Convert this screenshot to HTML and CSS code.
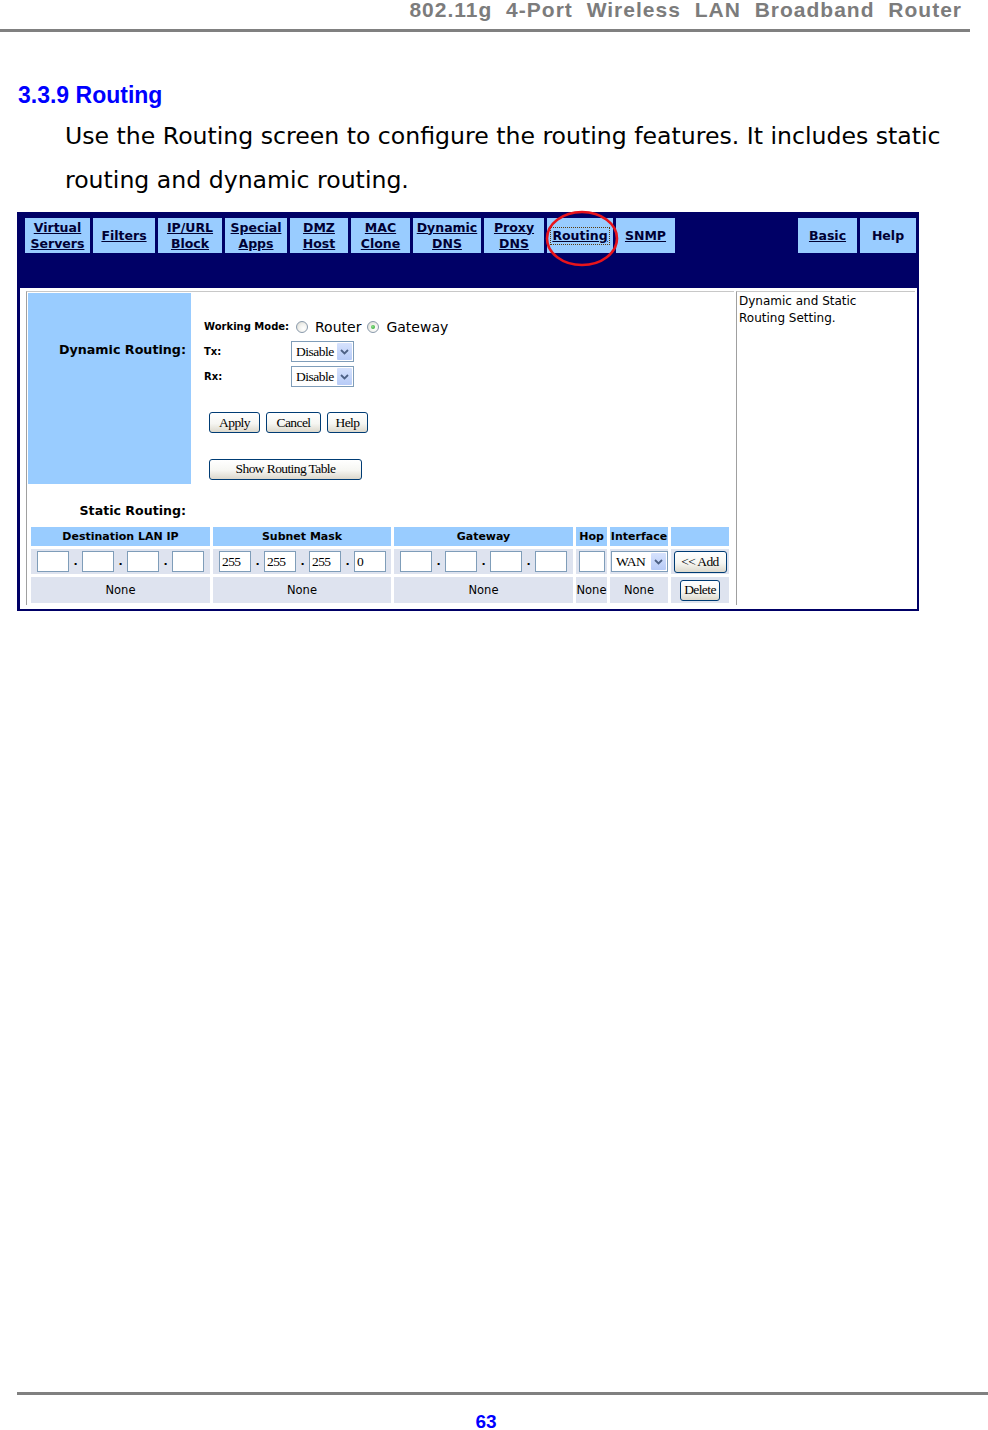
FILE: index.html
```html
<!DOCTYPE html>
<html lang="en">
<head>
<meta charset="utf-8">
<title>3.3.9 Routing</title>
<link rel="stylesheet" href="styles.css">
</head>
<body>
<div class="page">
  <header class="doc-header">802.11g 4-Port Wireless LAN Broadband Router</header>
  <h1 class="title">3.3.9 Routing</h1>
  <p class="intro">Use the Routing screen to configure the routing features. It includes static routing and dynamic routing.</p>

  <div class="shot">
    <nav class="tabs">
      <a class="tab w65">Virtual<br>Servers</a>
      <a class="tab w62">Filters</a>
      <a class="tab w64">IP/URL<br>Block</a>
      <a class="tab w62">Special<br>Apps</a>
      <a class="tab w58">DMZ<br>Host</a>
      <a class="tab w59">MAC<br>Clone</a>
      <a class="tab w68">Dynamic<br>DNS</a>
      <a class="tab w60">Proxy<br>DNS</a>
      <a class="tab w66"><span class="focus">Routing</span></a>
      <a class="tab w59">SNMP</a>
      <a class="tab w59 push">Basic</a>
      <a class="tab w56 plain">Help</a>
    </nav>
    <svg class="circle" viewBox="0 0 84 62" width="84" height="62" aria-hidden="true">
      <ellipse cx="40" cy="30.5" rx="35" ry="26.5" fill="none" stroke="#e8141b" stroke-width="2.6"/>
    </svg>

    <div class="content">
      <div class="main-cell">
        <div class="dyn">
          <div class="dyn-label">Dynamic Routing:</div>
          <div class="dyn-form">
            <div class="dyn-grid">
              <span class="lbl">Working Mode:</span>
              <span class="mode">
                <span class="radio r1"></span><span class="mode-text t1">Router</span>
                <span class="radio radio-on r2"></span><span class="mode-text t2">Gateway</span>
              </span>
              <span class="lbl">Tx:</span>
              <span class="select sel-63"><span class="sel-text">Disable</span><span class="sel-btn"><svg width="9" height="6" viewBox="0 0 9 6"><path d="M1 1 L4.5 4.5 L8 1" fill="none" stroke="#4d6185" stroke-width="1.8"/></svg></span></span>
              <span class="lbl">Rx:</span>
              <span class="select sel-63"><span class="sel-text">Disable</span><span class="sel-btn"><svg width="9" height="6" viewBox="0 0 9 6"><path d="M1 1 L4.5 4.5 L8 1" fill="none" stroke="#4d6185" stroke-width="1.8"/></svg></span></span>
            </div>
            <div class="dyn-buttons">
              <button class="btn b-apply">Apply</button>
              <button class="btn b-cancel">Cancel</button>
              <button class="btn b-help">Help</button>
            </div>
            <div class="dyn-show">
              <button class="btn b-show">Show Routing Table</button>
            </div>
          </div>
        </div>

        <div class="static-label">Static Routing:</div>

        <div class="rtable">
          <div class="th">Destination LAN IP</div>
          <div class="th">Subnet Mask</div>
          <div class="th">Gateway</div>
          <div class="th">Hop</div>
          <div class="th">Interface</div>
          <div class="th"></div>

          <div class="td td-ip"><input class="ip" value=""><span class="dot">.</span><input class="ip" value=""><span class="dot">.</span><input class="ip" value=""><span class="dot">.</span><input class="ip" value=""></div>
          <div class="td td-ip"><input class="ip" value="255"><span class="dot">.</span><input class="ip" value="255"><span class="dot">.</span><input class="ip" value="255"><span class="dot">.</span><input class="ip" value="0"></div>
          <div class="td td-ip"><input class="ip" value=""><span class="dot">.</span><input class="ip" value=""><span class="dot">.</span><input class="ip" value=""><span class="dot">.</span><input class="ip" value=""></div>
          <div class="td td-hop"><input class="ip hop" value=""></div>
          <div class="td td-if"><span class="select sel-57"><span class="sel-text">WAN</span><span class="sel-btn"><svg width="9" height="6" viewBox="0 0 9 6"><path d="M1 1 L4.5 4.5 L8 1" fill="none" stroke="#4d6185" stroke-width="1.8"/></svg></span></span></div>
          <div class="td td-center"><button class="btn b-add">&lt;&lt; Add</button></div>

          <div class="td td-center">None</div>
          <div class="td td-center">None</div>
          <div class="td td-center">None</div>
          <div class="td td-center">None</div>
          <div class="td td-center">None</div>
          <div class="td td-center"><button class="btn b-delete">Delete</button></div>
        </div>
      </div>
      <div class="help-cell">Dynamic and Static<br>Routing Setting.</div>
    </div>
  </div>

  <footer class="doc-footer">63</footer>
</div>
</body>
</html>
```

FILE: styles.css
```css
* { box-sizing: border-box; }

body {
  margin: 0;
  background: #fff;
  font-family: "DejaVu Sans", Verdana, sans-serif;
  color: #000;
}

.page {
  height: 1430px;
  overflow: hidden;
  display: flex;
  flex-direction: column;
}

/* document chrome */
.doc-header {
  width: 970px;
  height: 32px;
  padding-right: 8px;
  border-bottom: 3px solid #808080;
  text-align: right;
  font: bold 21px/20px "Liberation Sans", Arial, sans-serif;
  letter-spacing: 1px;
  word-spacing: 7px;
  color: #7c7c7c;
}

.title {
  margin: 50px 0 0 18px;
  font: bold 23px/26px "Liberation Sans", Arial, sans-serif;
  color: #0000ff;
}

.intro {
  margin: 6px 0 0 65px;
  width: 900px;
  font: 23.6px/44px "DejaVu Sans", Verdana, sans-serif;
  color: #000;
}

.doc-footer {
  margin-top: auto;
  margin-left: 17px;
  height: 38px;
  border-top: 3px solid #808080;
  padding: 19px 33px 0 0;
  text-align: center;
  font: bold 19px/15px "Liberation Sans", Arial, sans-serif;
  color: #0000ff;
}

/* screenshot */
.shot {
  position: relative;
  margin: 10px 0 0 17px;
  width: 902px;
  border: 2px solid #000066;
  border-left-width: 3px;
  background: #000066;
}

.tabs {
  height: 74px;
  display: flex;
  align-items: flex-start;
  gap: 3px;
  padding: 4px 1px 0 5px;
}

.tab {
  height: 35px;
  display: flex;
  align-items: center;
  justify-content: center;
  text-align: center;
  background: #99ccff;
  font: bold 12.5px/16px "DejaVu Sans", Verdana, sans-serif;
  color: #000033;
  text-decoration: underline;
}
.tab.plain { text-decoration: none; }
.push { margin-left: auto; }
.w56 { width: 56px; }
.w58 { width: 58px; }
.w59 { width: 59px; }
.w60 { width: 60px; }
.w62 { width: 62px; }
.w64 { width: 64px; }
.w65 { width: 65px; }
.w66 { width: 66px; }
.w68 { width: 68px; }

.focus {
  padding: 0 1px;
  outline: 1px dotted #5a3a10;
  outline-offset: 0;
}

.circle {
  position: absolute;
  left: 522px;
  top: -6px;
  pointer-events: none;
}

.content {
  display: flex;
  gap: 2px;
  padding: 3px 2px 4px 6px;
  background: #fff;
}

.main-cell {
  width: 708px;
  border-top: 1px solid #c8c8c8;
  border-left: 1px solid #a0a0a0;
  padding: 1px 0 2px 1px;
}

.help-cell {
  width: 179px;
  border-top: 1px solid #c8c8c8;
  border-left: 1px solid #a0a0a0;
  padding: 1px 2px 0;
  font: 12px/17px "DejaVu Sans", Verdana, sans-serif;
}

/* dynamic routing */
.dyn {
  display: flex;
  height: 191px;
}

.dyn-label {
  width: 163px;
  background: #99ccff;
  padding: 49px 5px 0 0;
  text-align: right;
  font: bold 12.7px/16px "DejaVu Sans", Verdana, sans-serif;
}

.dyn-form {
  padding: 21px 0 0 13px;
}

.dyn-grid {
  display: grid;
  grid-template-columns: 87px auto;
  grid-auto-rows: 25px;
  align-items: center;
}

.lbl {
  font: bold 10px/12px "DejaVu Sans", Verdana, sans-serif;
}

.mode {
  display: flex;
  align-items: center;
  font: 14px/16px "DejaVu Sans", Verdana, sans-serif;
}
.r1 { margin-left: 5px; }
.t1 { margin-left: 7px; }
.r2 { margin-left: 6px; }
.t2 { margin-left: 7px; }

.radio {
  width: 12px;
  height: 12px;
  border-radius: 50%;
  border: 1px solid #8a9aac;
  background: radial-gradient(circle at 65% 65%, #ffffff 0, #f2f2ee 45%, #d4d4cc 100%);
  display: inline-flex;
  align-items: center;
  justify-content: center;
}
.radio-on::after {
  content: "";
  width: 4px;
  height: 4px;
  border-radius: 50%;
  background: radial-gradient(circle at 40% 40%, #8ee08e, #1f9f1f);
}

.select {
  display: inline-flex;
  align-items: center;
  justify-content: space-between;
  height: 21px;
  border: 1px solid #7f9db9;
  background: #fff;
  padding: 1px;
}
.sel-63 { width: 63px; }
.sel-57 { width: 57px; }

.sel-text {
  padding-left: 3px;
  font: 13.5px/17px "Liberation Serif", "Times New Roman", serif;
  letter-spacing: -0.5px;
}

.sel-btn {
  width: 15px;
  height: 17px;
  border-radius: 1px;
  background: linear-gradient(#d6e2fd, #b7cbf7);
  display: flex;
  align-items: center;
  justify-content: center;
}

.dyn-buttons {
  margin-top: 23px;
  padding-left: 5px;
  display: flex;
  gap: 6px;
}

.dyn-show {
  margin-top: 25px;
  padding-left: 5px;
}

.btn {
  height: 21px;
  margin: 0;
  padding: 0;
  border: 1px solid #003c74;
  border-radius: 3px;
  background: linear-gradient(#ffffff, #f6f6f2 55%, #dcd8cc);
  font: 13.5px/16px "Liberation Serif", "Times New Roman", serif;
  letter-spacing: -0.6px;
  color: #000;
}
.b-apply { width: 51px; }
.b-cancel { width: 55px; }
.b-help { width: 41px; }
.b-show { width: 153px; }
.b-add { width: 53px; height: 22px; }
.b-delete { width: 40px; }

/* static routing */
.static-label {
  width: 163px;
  margin-top: 19px;
  padding-right: 5px;
  text-align: right;
  font: bold 12.6px/16px "DejaVu Sans", Verdana, sans-serif;
}

.rtable {
  margin: 8px 0 0 3px;
  display: grid;
  grid-template-columns: 179px 178px 179px 31px 58px 58px;
  grid-template-rows: 19px 25px 26px;
  gap: 3px;
}

.th {
  background: #99ccff;
  text-align: center;
  font: bold 11px/19px "DejaVu Sans", Verdana, sans-serif;
  color: #000;
}

.td {
  background: #dee3ef;
  display: flex;
  align-items: center;
}

.td-center {
  justify-content: center;
  font: 11.5px/14px "DejaVu Sans", Verdana, sans-serif;
}

.td-ip { padding-left: 6px; }
.td-hop { padding-left: 3px; }
.td-if { padding-left: 1px; }

.ip {
  width: 32px;
  height: 21px;
  margin: 0;
  padding: 0 0 0 2px;
  border: 1px solid #7f9db9;
  background: #fff;
  font: 13.5px "Liberation Serif", "Times New Roman", serif;
  letter-spacing: -0.6px;
  color: #000;
}
.ip.hop { width: 26px; }

.dot {
  width: 13px;
  text-align: center;
  font: bold 11px/21px "DejaVu Sans", Verdana, sans-serif;
}
```
